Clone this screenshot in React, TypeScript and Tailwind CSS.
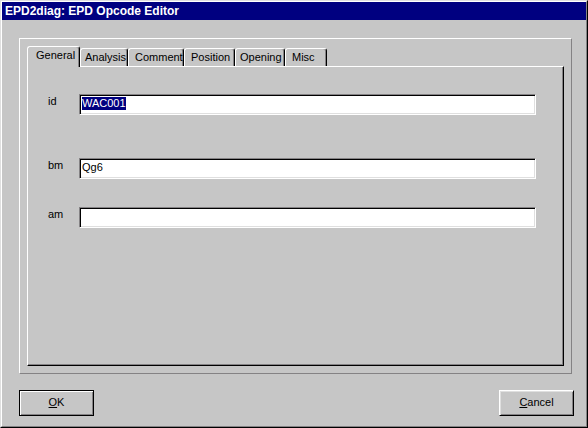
import React from "react";

type Tab = { label: string; cls: string; selected?: boolean };

const tabs: Tab[] = [
  { label: "General", cls: "w-[53px] pl-[8px]", selected: true },
  { label: "Analysis", cls: "w-[48px] pl-[4px]" },
  { label: "Comment", cls: "w-[56px] pl-[6px]" },
  { label: "Position", cls: "w-[51px] pl-[6px]" },
  { label: "Opening", cls: "w-[50px] pl-[4px]" },
  { label: "Misc", cls: "w-[42px] pl-[6px]" },
];

const Field = ({ label, children, className }: { label: string; children?: React.ReactNode; className?: string }) => (
  <div className={`flex items-start ${className ?? ""}`}>
    <div className="w-[31px] pt-[1px] leading-[13px]">{label}</div>
    <div className="w-[457px] h-[21px] bg-white border border-t-[#848284] border-l-[#848284] border-r-white border-b-white shadow-[inset_1px_1px_0_#000,inset_-1px_-1px_0_#dfdfdf] pl-[2px] pt-[2px] leading-[13px]">
      {children}
    </div>
  </div>
);

const App = () => {
  return (
    <div className="w-[588px] h-[428px] bg-[#c6c6c6] border border-t-[#dfdfdf] border-l-[#dfdfdf] border-r-black border-b-black font-['Liberation_Sans',Arial,sans-serif] text-[11px] text-black select-none">
      <div className="h-full flex flex-col border border-t-white border-l-white border-r-[#848284] border-b-[#848284]">
        {/* title bar */}
        <div className="h-[18px] bg-[#000080] text-white font-bold text-[12px] pl-[3px] flex items-center">
          EPD2diag: EPD Opcode Editor
        </div>

        {/* frame */}
        <div className="mt-[18px] ml-[17px] w-[553px] h-[336px] border border-t-white border-l-white border-r-[#848284] border-b-[#848284] p-[7px]">
          <div className="flex items-end h-[20px]">
            {tabs.map((t) =>
              t.selected ? (
                <div
                  key={t.label}
                  className={`${t.cls} relative z-10 -mb-px h-[21px] bg-[#c6c6c6] border-l border-t border-r border-l-white border-t-white border-r-black rounded-t-[3px] shadow-[inset_-1px_0_0_#848284] pt-[2px] leading-[13px]`}
                >
                  {t.label}
                </div>
              ) : (
                <div
                  key={t.label}
                  className={`${t.cls} h-[18px] border-l border-t border-r border-l-white border-t-white border-r-black rounded-t-[3px] shadow-[inset_-1px_0_0_#848284] pt-[2px] leading-[13px]`}
                >
                  {t.label}
                </div>
              )
            )}
          </div>

          {/* tab panel */}
          <div className="h-[300px] border border-t-white border-l-white border-r-black border-b-black shadow-[inset_-1px_-1px_0_#848284] pl-[20px] pt-[27px]">
            <Field label="id">
              <span className="bg-[#000080] text-white inline-block h-[13px]">WAC001</span>
            </Field>
            <Field label="bm" className="mt-[43px]">
              Qg6
            </Field>
            <Field label="am" className="mt-[28px]" />
          </div>
        </div>

        {/* buttons */}
        <div className="mt-[16px] pl-[17px] pr-[12px] flex justify-between">
          <button className="w-[75px] h-[26px] border border-black bg-[#c6c6c6] shadow-[inset_1px_1px_0_#fff,inset_-1px_-1px_0_#848284] flex items-center justify-center pb-[1px] leading-[13px]">
            <span><span className="underline">O</span>K</span>
          </button>
          <button className="w-[75px] h-[26px] border border-t-white border-l-white border-r-black border-b-black bg-[#c6c6c6] shadow-[inset_1px_1px_0_#dfdfdf,inset_-1px_-1px_0_#848284] flex items-center justify-center pb-[1px] leading-[13px]">
            <span><span className="underline">C</span>ancel</span>
          </button>
        </div>
      </div>
    </div>
  );
};

export default App;
